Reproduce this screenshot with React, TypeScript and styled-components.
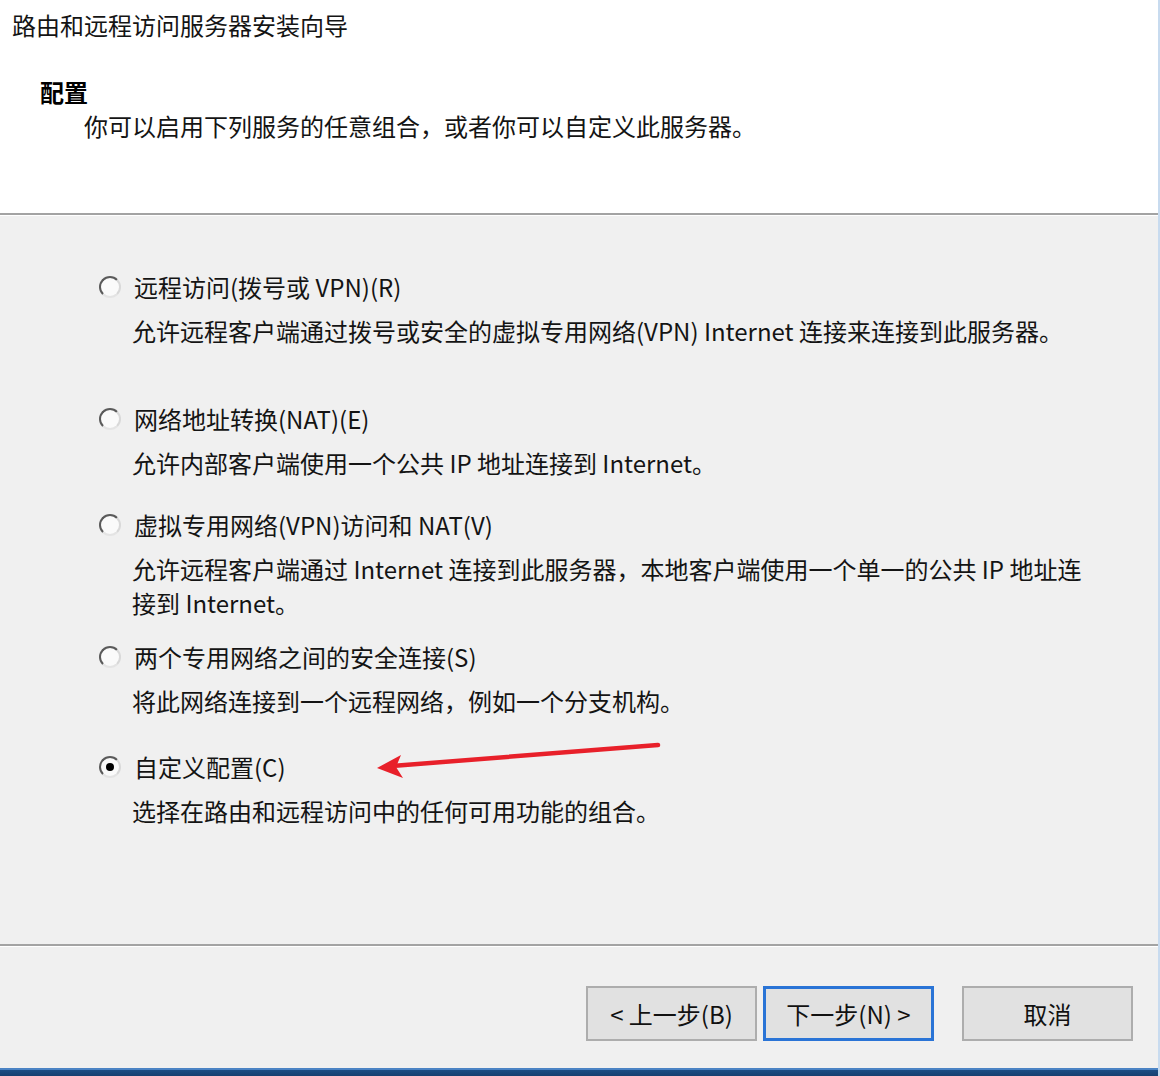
import styled, { createGlobalStyle } from 'styled-components';

const GlobalStyle = createGlobalStyle`
  html, body {
    margin: 0;
    padding: 0;
    background: #f0f0f0;
  }
  * {
    box-sizing: border-box;
  }
`;

const Window = styled.div`
  position: relative;
  width: 1160px;
  height: 1076px;
  display: flex;
  flex-direction: column;
  background: #f0f0f0;
  border-right: 2px solid #c8dbef;
  font-family: "Noto Sans CJK SC", "Noto Sans", sans-serif;
  color: #141414;
  font-size: 24px;
  overflow: hidden;
`;

const Header = styled.header`
  height: 213px;
  background: #ffffff;
  padding-top: 8px;
  flex-shrink: 0;
`;

const Title = styled.div`
  margin-left: 12px;
  line-height: 34px;
`;

const PageName = styled.div`
  margin: 33px 0 0 40px;
  line-height: 34px;
  font-weight: 700;
  color: #000;
`;

const PageHint = styled.div`
  margin-left: 84px;
  line-height: 34px;
`;

const Divider = styled.div`
  height: 3px;
  flex-shrink: 0;
  border-top: 2px solid #a3a3a3;
  background: #ffffff;
`;

const Body = styled.main`
  flex: 1;
  padding: 54px 0 0 99px;
  display: flex;
  flex-direction: column;
`;

const Option = styled.label<{ $gap: number }>`
  display: flex;
  flex-direction: column;
  margin-top: ${(p) => p.$gap}px;
  cursor: default;
`;

const OptionRow = styled.div`
  display: flex;
  align-items: center;
  height: 34px;
  gap: 13px;
`;

const Radio = styled.span<{ $checked?: boolean }>`
  position: relative;
  width: 22px;
  height: 22px;
  border-radius: 50%;
  border: 2px solid #5a5a5a;
  border-right-color: #d8d8d8;
  border-bottom-color: #e4e4e4;
  background: #fafafa;
  flex-shrink: 0;

  &::after {
    content: '';
    display: ${(p) => (p.$checked ? 'block' : 'none')};
    position: absolute;
    left: 50%;
    top: 50%;
    width: 8px;
    height: 8px;
    margin: -4px 0 0 -4px;
    border-radius: 50%;
    background: #000;
  }
`;

const OptionLabel = styled.span`
  line-height: 34px;
`;

const OptionDesc = styled.div`
  margin: 10px 0 0 33px;
  line-height: 34px;
`;

const Footer = styled.footer`
  height: 121px;
  flex-shrink: 0;
  display: flex;
  align-items: flex-start;
  justify-content: flex-end;
  padding: 39px 25px 0 0;
`;

const Button = styled.button<{ $focused?: boolean; $space?: number }>`
  width: 171px;
  height: 55px;
  margin-left: ${(p) => p.$space ?? 0}px;
  background: #e1e1e1;
  border: ${(p) => (p.$focused ? '3px solid #2a74d6' : '2px solid #adadad')};
  font-family: "Noto Sans CJK SC", "Noto Sans", sans-serif;
  font-size: 24px;
  color: #111;
  padding: 0;
`;

const TaskStrip = styled.div`
  height: 8px;
  flex-shrink: 0;
  border-top: 2px solid #4b83c4;
  background: linear-gradient(#1b4c84, #163f70);
`;

const Arrow = styled.svg`
  position: absolute;
  left: 370px;
  top: 736px;
  pointer-events: none;
`;

const options = [
  {
    label: '远程访问(拨号或 VPN)(R)',
    desc: ['允许远程客户端通过拨号或安全的虚拟专用网络(VPN) Internet 连接来连接到此服务器。'],
    gap: 0,
  },
  {
    label: '网络地址转换(NAT)(E)',
    desc: ['允许内部客户端使用一个公共 IP 地址连接到 Internet。'],
    gap: 54,
  },
  {
    label: '虚拟专用网络(VPN)访问和 NAT(V)',
    desc: [
      '允许远程客户端通过 Internet 连接到此服务器，本地客户端使用一个单一的公共 IP 地址连',
      '接到 Internet。',
    ],
    gap: 28,
  },
  {
    label: '两个专用网络之间的安全连接(S)',
    desc: ['将此网络连接到一个远程网络，例如一个分支机构。'],
    gap: 20,
  },
  {
    label: '自定义配置(C)',
    desc: ['选择在路由和远程访问中的任何可用功能的组合。'],
    gap: 32,
    checked: true,
  },
];

export default function App() {
  return (
    <Window>
      <GlobalStyle />
      <Header>
        <Title>路由和远程访问服务器安装向导</Title>
        <PageName>配置</PageName>
        <PageHint>你可以启用下列服务的任意组合，或者你可以自定义此服务器。</PageHint>
      </Header>
      <Divider />
      <Body>
        {options.map((o) => (
          <Option key={o.label} $gap={o.gap}>
            <OptionRow>
              <Radio $checked={o.checked} />
              <OptionLabel>{o.label}</OptionLabel>
            </OptionRow>
            <OptionDesc>
              {o.desc.map((line, i) => (
                <div key={i}>{line}</div>
              ))}
            </OptionDesc>
          </Option>
        ))}
      </Body>
      <Divider />
      <Footer>
        <Button>&lt; 上一步(B)</Button>
        <Button $focused $space={6}>下一步(N) &gt;</Button>
        <Button $space={28}>取消</Button>
      </Footer>
      <TaskStrip />
      <Arrow width="300" height="44" viewBox="0 0 300 44">
        <line x1="288" y1="9" x2="22" y2="30" stroke="#e8202a" strokeWidth="4.5" strokeLinecap="round" />
        <polygon points="7,32 31,19 26,31 33,42" fill="#e8202a" />
      </Arrow>
    </Window>
  );
}
